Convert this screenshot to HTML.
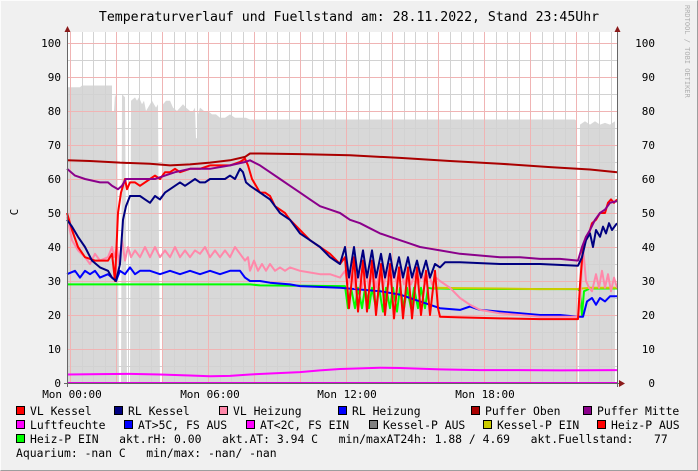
<!DOCTYPE html>
<html><head><meta charset="utf-8"><style>
html,body{margin:0;padding:0;background:#f0f0f0;}
svg{display:block;}
text{font-family:"DejaVu Sans Mono","Liberation Mono",monospace;}
</style></head><body>
<svg width="698" height="471" viewBox="0 0 698 471" xmlns="http://www.w3.org/2000/svg">
<rect x="0" y="0" width="698" height="471" fill="#f0f0f0"/>
<path d="M0.5 470.5V0.5H697.5" stroke="#fcfcfc" fill="none"/>
<path d="M0.5 470.5H697.5V0.5" stroke="#9e9e9e" fill="none"/>
<text x="349" y="21" font-size="13.2" text-anchor="middle" fill="#000">Temperaturverlauf und Fuellstand am: 28.11.2022, Stand 23:45Uhr</text>
<text transform="translate(685,5) rotate(90)" font-size="7" fill="#b0b0b0">RRDTOOL / TOBI OETIKER</text>
<text transform="translate(18,212) rotate(-90)" font-size="11" fill="#000" text-anchor="middle">C</text>
<rect x="67" y="32" width="550" height="351" fill="#fff"/>
<g transform="translate(0,383) scale(1,-3.4)">
<polygon fill="#d8d8d8" points="67,0 67,87 80,87 82,87.5 100,87.5 112,87.5 112,80 114,80 115,85 117,83 119,0 121,0 122,85 125,84 127,0 130,0 131,83 135,84 137,83 139,84 142,82 144,83 146,80 148,81 150,82 152,83 154,82 156,81 158,82 160,0 162,0 163,82 166,83 170,83 173,81 177,80 180,81 183,82 186,81 190,80 193,80 195,81 196,72 197,72 198,79 200,81 204,80 208,80 212,79 216,79 220,78 225,78 230,79 235,78 240,78 246,78 250,77.5 300,77.5 400,77.5 500,77.5 575,77.5 577,77 578,0 579,0 580,76 585,77 590,76 595,77 600,76 605,76.5 610,76 615,77 615,0"/>
</g>
<g stroke-width="1" shape-rendering="crispEdges">
<g stroke="#d2d2d2">
<path d="M67 366.5H617M67 332.5H617M67 298.5H617M67 264.5H617M67 230.5H617M67 196.5H617M67 162.5H617M67 128.5H617M67 94.5H617M67 60.5H617"/>
<path d="M82.5 32V383M93.5 32V383M105.5 32V383M128.5 32V383M139.5 32V383M151.5 32V383M174.5 32V383M185.5 32V383M197.5 32V383M220.5 32V383M231.5 32V383M243.5 32V383M266.5 32V383M277.5 32V383M289.5 32V383M312.5 32V383M323.5 32V383M335.5 32V383M358.5 32V383M369.5 32V383M381.5 32V383M404.5 32V383M415.5 32V383M427.5 32V383M450.5 32V383M461.5 32V383M473.5 32V383M496.5 32V383M507.5 32V383M519.5 32V383M542.5 32V383M553.5 32V383M565.5 32V383M588.5 32V383M599.5 32V383M611.5 32V383"/>
</g>
<g stroke="#f0b4b4">
<path d="M67 349.5H617M67 315.5H617M67 281.5H617M67 247.5H617M67 213.5H617M67 179.5H617M67 145.5H617M67 111.5H617M67 77.5H617M67 43.5H617"/>
<path d="M70.5 32V383M116.5 32V383M162.5 32V383M208.5 32V383M254.5 32V383M300.5 32V383M346.5 32V383M392.5 32V383M438.5 32V383M484.5 32V383M530.5 32V383M576.5 32V383"/>
</g>
</g>
<g transform="translate(0,383) scale(1,-3.4)" fill="none" stroke-width="2" stroke-linejoin="round">
<polyline vector-effect="non-scaling-stroke" stroke="#00ff00" points="67,29 250,29 260,28.7 345,28.5 348,22 351,28 355,22 358,28 362,22 365,28 369,22 372,28 376,22 379,28 383,21 386,28 390,22 393,28 397,21 400,28 404,22 407,28 411,22 414,28 418,22 421,28 425,22 428,28 432,27.8 440,27.8 460,27.7 578,27.6 580,27 582,20 584,27 590,27.8 617,27.8"/>
<polyline vector-effect="non-scaling-stroke" stroke="#cccc00" points="432,28 460,27.9 500,27.8 540,27.6 578,27.7 590,28 617,28"/>
<polyline vector-effect="non-scaling-stroke" stroke="#0000ff" points="67,32 75,33 80,31 85,33 90,32 95,33 100,31 108,32 112,31 116,30 120,33 125,32 130,34 135,32 140,33 150,33 160,32 170,33 180,32 190,33 200,32 210,33 220,32 230,33 240,33 245,31 250,30 260,30 270,29.5 290,29 300,28.5 340,28 360,27.5 380,27 400,26 420,24 430,23 440,22 460,21.5 470,22.5 480,21.5 500,21 520,20.5 540,20 560,20 578,19.5 583,19.5 587,24 592,25 596,23 600,25 605,24 610,25.5 617,25.5"/>
<polyline vector-effect="non-scaling-stroke" stroke="#ff88aa" points="67,49 72,42 78,39 85,37 90,35 95,38 100,36 108,37 112,40 114,37 117,40 119,35 122,42 125,36 128,40 131,37 135,39 140,37 145,40 150,37 155,40 160,37 165,39 170,37 175,40 180,37 185,39 190,37 195,39 200,38 205,40 210,37 215,39 220,37 225,39 230,37 235,40 240,38 245,36 248,37 250,33 254,36 258,33 262,35 266,33 270,35 275,33 280,34 285,33 290,34 300,33 310,32.5 320,32 330,32 340,31 345,33 348,29 352,33 355,28 359,33 362,28 366,33 369,28 373,33 376,28 380,33 383,28 387,33 390,29 394,33 397,29 401,33 404,29 408,32 411,29 415,32 418,29 422,32 425,29 429,32 432,29 436,31 440,30 450,28 460,25 470,23 480,21.5 500,20.5 520,20 540,19.5 578,19.5 580,24 583,40 586,30 589,28 592,27 596,32 599,28 602,33 605,28 608,32 611,27 614,31 617,28"/>
<polyline vector-effect="non-scaling-stroke" stroke="#ff0000" points="67,50 72,45 78,40 85,37 95,36 108,36 112,38 115,30 118,50 121,56 123,58 125,60 127,57 130,59 135,59 140,58 145,59 150,60 155,61 160,60 165,62 170,62 175,63 180,62 190,63 200,63 210,64 220,64 230,64 240,65 245,66 248,64 252,60 256,58 260,56 265,56 270,55 275,52 280,51 285,50 290,48 300,45 310,42 320,40 330,38 340,35 345,37 349,22 354,37 358,21 363,36 367,21 372,36 376,20 381,35 385,20 390,35 394,19 399,34 403,19 408,34 412,19 417,34 421,20 426,33 430,20 435,33 438,22 440,19.5 460,19.3 500,19 540,18.8 578,18.8 580,29 583,40 586,43 589,44 592,47 596,48 600,50 605,50 608,53 611,54 614,53 617,54"/>
<polyline vector-effect="non-scaling-stroke" stroke="#000080" points="67,48 72,46 78,43 85,40 92,36 100,34 108,33 112,31 116,30 120,35 123,48 126,52 130,55 135,55 140,55 145,54 150,53 155,55 160,54 165,56 170,57 175,58 180,59 185,58 190,59 195,60 200,59 205,59 210,60 215,60 220,60 225,60 230,61 235,60 240,63 243,62 246,59 250,58 255,57 260,56 265,55 270,54 275,52 280,50 285,49 290,48 300,44 310,42 320,40 330,37 340,35 345,40 349,31 354,40 358,31 363,39 367,31 372,39 376,31 381,38 385,31 390,38 394,31 399,37 403,31 408,37 412,31 417,36 421,31 426,36 430,31 435,35 440,34 445,35.5 460,35.5 500,35 540,35 578,34.5 582,37 586,42 590,44 593,40 596,45 600,43 603,46 606,44 609,47 612,45 617,47"/>
<polyline vector-effect="non-scaling-stroke" stroke="#8b008b" points="67,63 75,61 85,60 100,59 108,59 112,58 118,57 122,58 126,60 132,60 140,60 155,60 165,61 175,62 190,63 210,63 230,64 245,65 250,65.5 260,64 270,62 280,60 290,58 300,56 310,54 320,52 330,51 340,50 350,48 360,47 370,45.5 380,44 390,43 400,42 410,41 420,40 430,39.5 440,39 460,38 480,37.5 500,37 520,37 540,36.5 560,36.5 578,36 582,40 586,43 590,45 595,48 600,50 605,51 610,53 617,53.5"/>
<polyline vector-effect="non-scaling-stroke" stroke="#aa0000" points="67,65.5 90,65.3 120,64.8 150,64.5 170,64 190,64.3 210,64.8 230,65.5 245,66.5 250,67.5 260,67.5 300,67.3 350,67 400,66.2 450,65.3 500,64.5 550,63.5 590,62.8 617,62"/>
<polyline vector-effect="non-scaling-stroke" stroke="#ff00ff" points="67,2.5 100,2.6 130,2.7 160,2.5 190,2.2 210,2 230,2.1 250,2.5 270,2.8 300,3.2 320,3.7 340,4.1 360,4.3 380,4.5 400,4.4 440,4 480,3.8 520,3.8 560,3.7 617,3.8"/>
</g>
<rect x="67" y="382" width="550" height="2" fill="#e000e0"/>
<path d="M67.5 30V387" stroke="#666" stroke-width="1"/>
<path d="M64 383.5H620" stroke="#666" stroke-width="1"/>
<path d="M617.5 30V387" stroke="#666" stroke-width="1"/>
<path d="M64.5 32 67.5 26 70.5 32Z" fill="#8b1a1a"/>
<path d="M614.5 32 617.5 26 620.5 32Z" fill="#8b1a1a"/>
<path d="M619 380 625 383.5 619 387Z" fill="#8b1a1a"/>
<g font-size="11" fill="#000" text-anchor="end">
<text x="61" y="47">100</text><text x="61" y="81">90</text><text x="61" y="115">80</text><text x="61" y="149">70</text><text x="61" y="183">60</text><text x="61" y="217">50</text><text x="61" y="251">40</text><text x="61" y="285">30</text><text x="61" y="319">20</text><text x="61" y="353">10</text><text x="61" y="387">0</text>
</g>
<g font-size="11" fill="#000" text-anchor="end">
<text x="655" y="47">100</text><text x="655" y="81">90</text><text x="655" y="115">80</text><text x="655" y="149">70</text><text x="655" y="183">60</text><text x="655" y="217">50</text><text x="655" y="251">40</text><text x="655" y="285">30</text><text x="655" y="319">20</text><text x="655" y="353">10</text><text x="655" y="387">0</text>
</g>
<g font-size="11" fill="#000" text-anchor="middle">
<text x="72" y="398">Mon 00:00</text><text x="210" y="398">Mon 06:00</text><text x="347" y="398">Mon 12:00</text><text x="485" y="398">Mon 18:00</text>
</g>
<g stroke="#000" stroke-width="1">
<rect x="16.5" y="406.5" width="8" height="8" fill="#ff0000"/>
<rect x="114.5" y="406.5" width="8" height="8" fill="#000080"/>
<rect x="219.5" y="406.5" width="8" height="8" fill="#ff88aa"/>
<rect x="338.5" y="406.5" width="8" height="8" fill="#0000ff"/>
<rect x="471.5" y="406.5" width="8" height="8" fill="#aa0000"/>
<rect x="583.5" y="406.5" width="8" height="8" fill="#8b008b"/>
<rect x="16.5" y="420.5" width="8" height="8" fill="#ff00ff"/>
<rect x="124.5" y="420.5" width="8" height="8" fill="#0000ff"/>
<rect x="246.5" y="420.5" width="8" height="8" fill="#ff00ff"/>
<rect x="369.5" y="420.5" width="8" height="8" fill="#808080"/>
<rect x="483.5" y="420.5" width="8" height="8" fill="#cccc00"/>
<rect x="597.5" y="420.5" width="8" height="8" fill="#ff0000"/>
<rect x="16.5" y="434.5" width="8" height="8" fill="#00ff00"/>
</g>
<g font-size="11.4" fill="#000" style="white-space:pre">
<text x="30" y="415">VL Kessel</text>
<text x="128" y="415">RL Kessel</text>
<text x="233" y="415">VL Heizung</text>
<text x="352" y="415">RL Heizung</text>
<text x="485" y="415">Puffer Oben</text>
<text x="597" y="415">Puffer Mitte</text>
<text x="30" y="429">Luftfeuchte</text>
<text x="138" y="429">AT&gt;5C, FS AUS</text>
<text x="260" y="429">AT&lt;2C, FS EIN</text>
<text x="383" y="429">Kessel-P AUS</text>
<text x="497" y="429">Kessel-P EIN</text>
<text x="611" y="429">Heiz-P AUS</text>
<text x="30" y="443" xml:space="preserve">Heiz-P EIN   akt.rH: 0.00   akt.AT: 3.94 C   min/maxAT24h: 1.88 / 4.69   akt.Fuellstand:   77</text>
<text x="16" y="457" xml:space="preserve">Aquarium: -nan C   min/max: -nan/ -nan</text>
</g>
</svg>
</body></html>
